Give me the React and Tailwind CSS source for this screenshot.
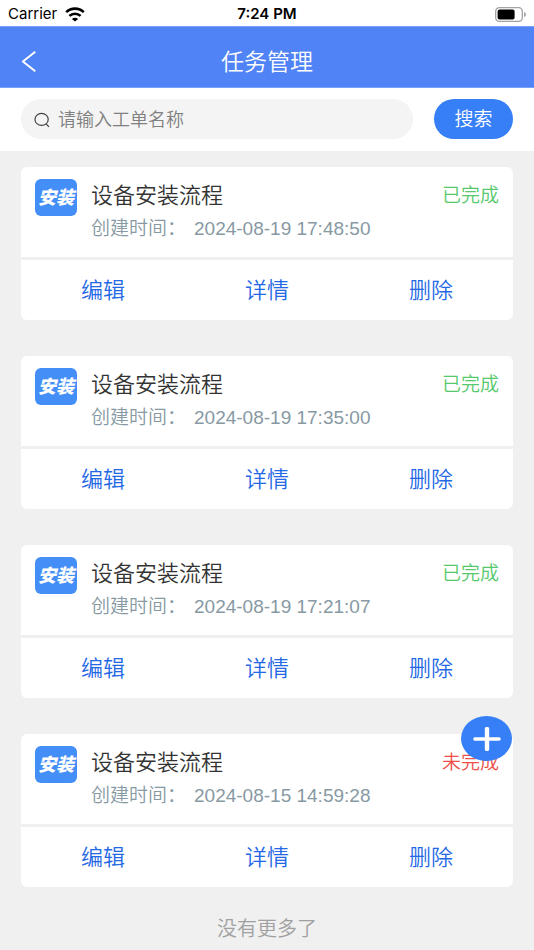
import { useState } from 'react';

const tasks = [
    { id: 1, name: '设备安装流程', createdAt: '2024-08-19 17:48:50', done: true },
    { id: 2, name: '设备安装流程', createdAt: '2024-08-19 17:35:00', done: true },
    { id: 3, name: '设备安装流程', createdAt: '2024-08-19 17:21:07', done: true },
    { id: 4, name: '设备安装流程', createdAt: '2024-08-15 14:59:28', done: false },
];

const StatusBar = () => (
    <div className="grid h-[26px] grid-cols-3 items-center bg-white px-2 pt-0.5 font-['Inter',sans-serif] text-[15px] leading-5 font-normal text-black">
        <div className="flex items-center gap-2">
            <span>Carrier</span>
            <svg width="20" height="15" viewBox="0 0 20 15" fill="none" stroke="currentColor" strokeWidth="2.6" aria-hidden="true">
                <path d="M1.2 5.1C6 .5 14 .5 18.8 5.1" />
                <path d="M4.4 8.9c3.2-2.9 8-2.9 11.2 0" />
                <path d="M10 14.4 6.9 11.9c1.8-1.5 4.4-1.5 6.2 0z" fill="currentColor" stroke="none" />
            </svg>
        </div>
        <span className="text-center font-semibold">7:24 PM</span>
        <svg className="justify-self-end" width="31" height="15" viewBox="0 0 31 15" aria-hidden="true">
            <rect x=".7" y=".7" width="26.6" height="13.6" rx="3.6" fill="none" stroke="#a3a3a3" strokeWidth="1.3" />
            <rect x="2.6" y="2.6" width="17" height="9.8" rx="2" fill="#000" />
            <path d="M29 5c1.5.5 1.9 1.4 1.9 2.5S30.5 9.5 29 10z" fill="#a3a3a3" />
        </svg>
    </div>
);

const TaskCard = ({ task }) => (
    <article className="rounded-md bg-white">
        <div className="flex h-[90px] items-start px-3.5 pt-3">
            <div className="flex h-[37px] w-[42px] shrink-0 items-center justify-center rounded-md bg-[#448ef7] text-[18px] leading-none font-black text-white italic">
                安装
            </div>
            <div className="ml-3.5 min-w-0 flex-1">
                <h2 className="text-[22px] leading-[34px] font-[350] text-[#333333]">{task.name}</h2>
                <p className="flex gap-2 text-[19px] leading-8 whitespace-nowrap text-[#8799a3]">
                    <span>创建时间：</span>
                    <time>{task.createdAt}</time>
                </p>
            </div>
            <span className={`text-[19px] leading-[34px] ${task.done ? 'text-[#55c96b]' : 'text-[#ee4f49]'}`}>
                {task.done ? '已完成' : '未完成'}
            </span>
        </div>
        <div className="grid h-[63px] grid-cols-3 border-t-3 border-[#f0f0f0] text-[22px] text-[#2468e5]">
            <button type="button">编辑</button>
            <button type="button">详情</button>
            <button type="button">删除</button>
        </div>
    </article>
);

export default function App() {
    const [keyword, setKeyword] = useState('');

    return (
        <div className="min-h-screen bg-[#f0f0f0] font-['Liberation_Sans','Noto_Sans_CJK_SC',sans-serif] font-[350]">
            <StatusBar />
            <header className="grid h-[62px] grid-cols-[40px_1fr_40px] items-center border-y border-[#7ba1fa] bg-[#5083f6] px-4 pt-2 text-white">
                <button type="button" aria-label="返回" className="flex h-10 items-center pl-1.5">
                    <svg width="14" height="21" viewBox="0 0 14 21" fill="none" stroke="currentColor" strokeWidth="1.9" aria-hidden="true">
                        <path d="M13.3.7.9 10.5l12.4 9.8" />
                    </svg>
                </button>
                <h1 className="pt-0.5 text-center text-[23px] leading-8 font-[350]">任务管理</h1>
            </header>

            <form className="flex gap-[21px] bg-white px-[21px] pt-[11px] pb-3" onSubmit={(e) => e.preventDefault()}>
                <label className="flex h-10 min-w-0 flex-1 items-center gap-2 rounded-full bg-[#f4f4f4] px-[13px] pt-0.5">
                    <svg className="shrink-0" width="16" height="16" viewBox="0 0 16 16" fill="none" stroke="#444" strokeWidth="1.2" aria-hidden="true">
                        <ellipse cx="7.6" cy="7.4" rx="6.6" ry="6" />
                        <path d="m12.2 12 2.800 2.800" />
                    </svg>
                    <input
                        type="text"
                        aria-label="工单名称"
                        placeholder="请输入工单名称"
                        value={keyword}
                        onChange={(e) => setKeyword(e.target.value)}
                        className="w-full min-w-0 bg-transparent text-[18px] text-[#333333] outline-none placeholder:text-[#808080]"
                    />
                </label>
                <button type="submit" className="h-10 w-[79px] rounded-full bg-[#367ff7] pt-0.5 text-[19px] text-white">
                    搜索
                </button>
            </form>

            <main className="flex flex-col gap-9 px-[21px] pt-4">
                {tasks.map((task) => (
                    <TaskCard key={task.id} task={task} />
                ))}
            </main>
            <p className="pt-[26px] text-center text-[20px] leading-8 text-[#a0a0a0]">没有更多了</p>

            <button
                type="button"
                aria-label="新增"
                className="fixed right-[22px] bottom-[189px] flex h-[45px] w-[51px] items-center justify-center rounded-[50%] bg-[#367ff7] text-white"
            >
                <svg width="28" height="24" viewBox="0 0 28 24" stroke="currentColor" strokeLinecap="round" aria-hidden="true">
                    <path d="M2 12h24" strokeWidth="3.6" />
                    <path d="M14 2v20" strokeWidth="4.4" />
                </svg>
            </button>
        </div>
    );
}
